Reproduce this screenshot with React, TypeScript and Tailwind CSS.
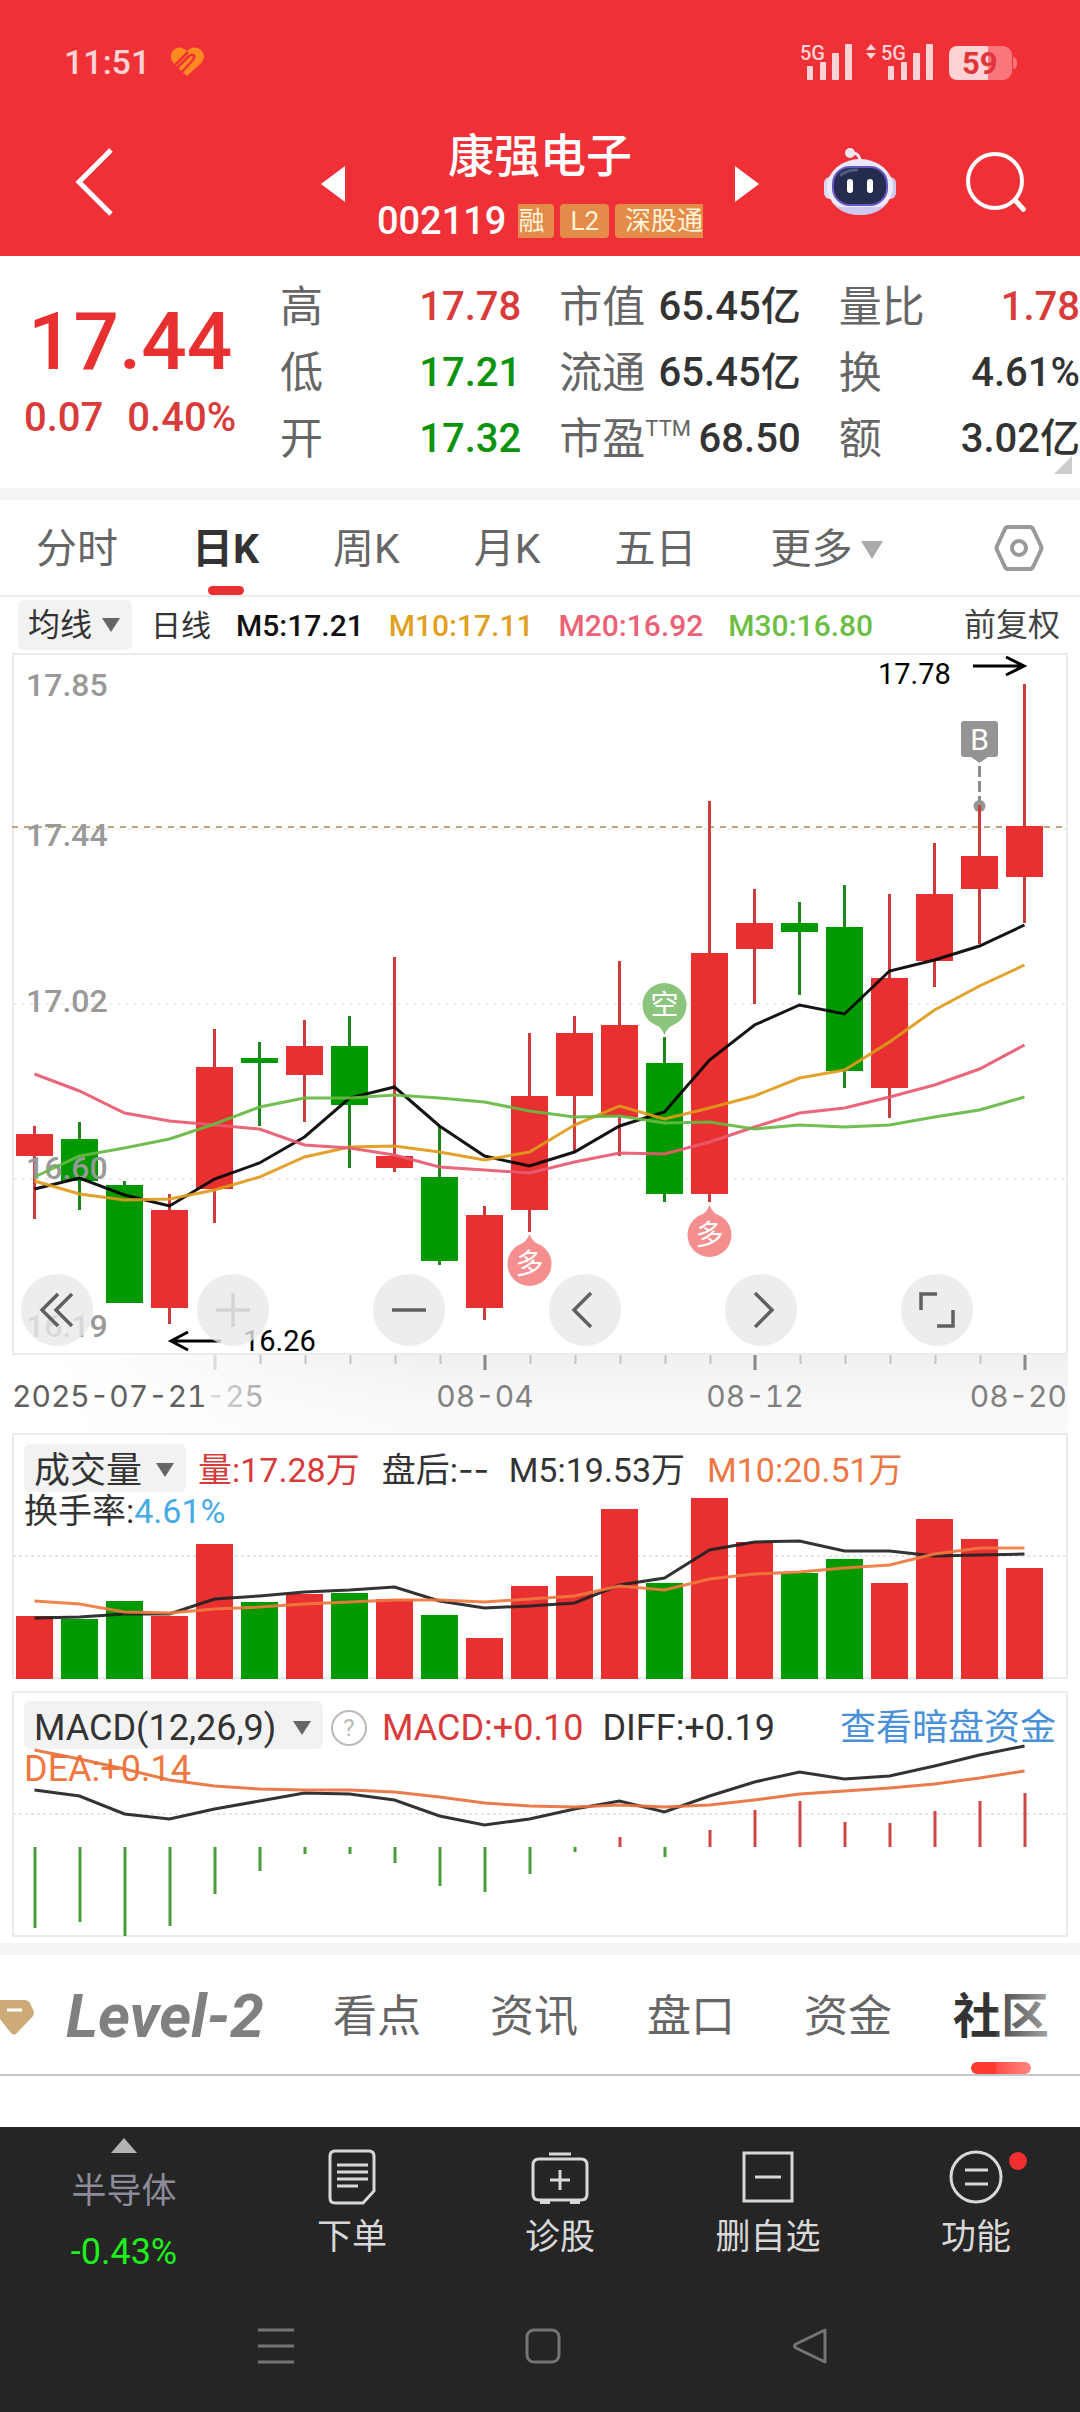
import { useState } from "react";

const RED = "#e83030";
const GREEN = "#009900";

// up, open/close body top, body bottom, wick top, wick bottom
const CANDLES: [boolean, number, number, number, number][] = [
  [true, 1134, 1156, 1126, 1219],
  [false, 1139, 1181, 1122, 1210],
  [false, 1185, 1303, 1181, 1303],
  [true, 1210, 1308, 1194, 1324],
  [true, 1067, 1189, 1029, 1223],
  [false, 1058, 1063, 1042, 1126],
  [true, 1046, 1075, 1020, 1122],
  [false, 1046, 1105, 1016, 1168],
  [true, 1156, 1168, 957, 1172],
  [false, 1177, 1261, 1126, 1265],
  [true, 1215, 1308, 1206, 1320],
  [true, 1096, 1210, 1033, 1232],
  [true, 1033, 1096, 1016, 1152],
  [true, 1025, 1117, 961, 1156],
  [false, 1063, 1194, 1037, 1202],
  [true, 953, 1194, 801, 1202],
  [true, 923, 949, 889, 1004],
  [false, 923, 932, 902, 995],
  [false, 927, 1071, 885, 1088],
  [true, 978, 1088, 894, 1118],
  [true, 894, 961, 843, 987],
  [true, 856, 889, 805, 944],
  [true, 826, 877, 684, 923],
];

const MA5 = [1189, 1178, 1195, 1206, 1179, 1163, 1137, 1098, 1087, 1126, 1156, 1166, 1152, 1126, 1112, 1060, 1025, 1005, 1014, 971, 960, 946, 925];
const MA10 = [1181, 1194, 1200, 1199, 1190, 1177, 1157, 1147, 1146, 1152, 1160, 1152, 1125, 1106, 1119, 1108, 1096, 1078, 1070, 1042, 1010, 986, 965];
const MA20 = [1074, 1091, 1113, 1121, 1125, 1129, 1145, 1148, 1155, 1167, 1170, 1173, 1162, 1153, 1154, 1142, 1127, 1113, 1108, 1097, 1085, 1069, 1045];
const MA30 = [1177, 1156, 1148, 1139, 1124, 1107, 1098, 1098, 1095, 1098, 1102, 1111, 1117, 1116, 1123, 1122, 1129, 1125, 1127, 1125, 1117, 1110, 1097];

const VOLUMES = [1616, 1619, 1601, 1616, 1544, 1602, 1594, 1593, 1599, 1615, 1638, 1586, 1576, 1509, 1583, 1498, 1542, 1573, 1559, 1583, 1519, 1539, 1568];
const VOL5 = [1618, 1617, 1614, 1614, 1599, 1596, 1592, 1590, 1587, 1601, 1608, 1606, 1603, 1585, 1578, 1550, 1542, 1541, 1551, 1551, 1556, 1555, 1554];
const VOL10 = [1601, 1604, 1612, 1613, 1609, 1607, 1604, 1602, 1600, 1600, 1602, 1599, 1596, 1586, 1590, 1579, 1574, 1572, 1568, 1565, 1554, 1548, 1548];

const DIFF = [1790, 1796, 1814, 1819, 1809, 1801, 1793, 1794, 1800, 1816, 1825, 1819, 1809, 1801, 1812, 1796, 1782, 1772, 1779, 1776, 1766, 1755, 1746];
const DEA = [1750, 1759, 1769, 1780, 1786, 1789, 1790, 1790, 1792, 1797, 1803, 1806, 1807, 1805, 1807, 1805, 1800, 1794, 1791, 1788, 1784, 1778, 1771];
const HIST = [1928, 1922, 1936, 1926, 1894, 1871, 1854, 1854, 1863, 1886, 1892, 1874, 1852, 1837, 1857, 1830, 1810, 1801, 1822, 1823, 1811, 1801, 1793];

const cx = (i: number) => 34.5 + i * 45;
const toPoints = (ys: number[]) => ys.map((y, i) => `${cx(i)},${y}`).join(" ");

function Line({ data, color }: { data: number[]; color: string }) {
  return <polyline points={toPoints(data)} fill="none" stroke={color} strokeWidth="3" strokeOpacity="0.92" />;
}

function Down({ className }: { className: string }) {
  return (
    <svg viewBox="0 0 20 14" className={className} fill="currentColor" preserveAspectRatio="none">
      <path d="M0 0h20L10 14z" />
    </svg>
  );
}

function Chip({ name, value, className }: { name: string; value: string; className: string }) {
  return (
    <label className="relative shrink-0 text-[#666]">
      <select
        aria-label={name}
        defaultValue={value}
        className={`appearance-none rounded-md bg-[#f2f2f2] pl-2.5 text-[#333] ${className}`}
      >
        <option>{value}</option>
      </select>
      <Down className="pointer-events-none absolute right-3 top-1/2 h-3.5 w-[18px] -translate-y-1/2" />
    </label>
  );
}

function StatusBar() {
  return (
    <div className="flex h-[100px] items-start justify-between pl-16 pr-[62px] pt-[42px]">
      <div className="flex items-center gap-5">
        <span className="text-[34px] font-medium leading-[40px] text-[#ffd3d5]">11:51</span>
        <svg viewBox="0 0 34 30" className="h-[30px] w-[34px]">
          <path d="M17 29 4 17Q-1 11 2 5 6-1 12 1 15 2 17 4 22-1 28 1 34 4 34 10 33 15 29 18z" fill="#ff8a1f" />
          <path d="M4 19 18 5M12 25 22 14Q26 9 23 8 21 7 18 10L7 21" fill="none" stroke="#f03037" strokeWidth="2.500" />
        </svg>
      </div>
      <svg viewBox="0 0 218 42" className="h-[42px] w-[218px]" fill="#ffd3d5">
        {[0, 81].map((x) => (
          <g key={x}>
            <text x={x} y="18" fontSize="20" fontWeight="500">5G</text>
            <rect x={x + 7} y="24" width="6" height="14" rx="1" />
            <rect x={x + 20} y="20" width="6" height="18" rx="1" />
            <rect x={x + 32} y="11" width="7" height="27" rx="1" />
            <rect x={x + 45} y="2" width="7" height="36" rx="1" />
          </g>
        ))}
        <path d="M66 8l5-6 5 6zM66 11l5 6 5-6z" />
        <rect x="149" y="4" width="63" height="34" rx="9" fill="#f9767a" />
        <path d="M213 15q4 0 4 6t-4 6z" fill="#f9767a" />
        <path d="M158 4h30v34h-30q-9 0-9-9V13q0-9 9-9z" />
        <text x="162" y="32" fontSize="31" fontWeight="700" fill="#e0353b">59</text>
      </svg>
    </div>
  );
}

function Robot() {
  return (
    <svg viewBox="0 0 72 68" className="h-[68px] w-[72px]">
      <path d="M26 6q8-3 10 6" fill="none" stroke="#e6e4f5" strokeWidth="3" />
      <circle cx="26" cy="5" r="5" fill="#e9e7f6" />
      <rect x="0" y="29" width="12" height="22" rx="6" fill="#dcd8f2" />
      <rect x="60" y="29" width="12" height="22" rx="6" fill="#cfc8ee" />
      <ellipse cx="36" cy="39" rx="33" ry="28" fill="#eceafa" />
      <path d="M8 54q9 13 28 13t28-13q-5 5-12 5H20q-7 0-12-5z" fill="#cdc8ee" />
      <rect x="9" y="19" width="54" height="38" rx="17" fill="#252c4d" stroke="#6557c4" strokeWidth="2" />
      <path d="M17 27q6-5 16-5" stroke="#4c5b80" strokeWidth="3" fill="none" strokeLinecap="round" />
      <rect x="23" y="31" width="6" height="14" rx="3" fill="#fff" />
      <rect x="43" y="31" width="6" height="14" rx="3" fill="#fff" />
    </svg>
  );
}

function Header() {
  return (
    <header className="bg-[#f03037] text-white">
      <StatusBar />
      <div className="grid h-[156px] grid-cols-[1fr_438px_1fr] items-center">
        <button aria-label="返回" className="ml-[74px] mt-2 w-10">
          <svg viewBox="0 0 40 68" className="h-[68px] w-10" fill="none" stroke="currentColor" strokeWidth="5">
            <path d="M37 2 5 34 37 66" />
          </svg>
        </button>
        <div className="flex items-center justify-between">
          <button aria-label="上一只" className="mt-3">
            <svg viewBox="0 0 24 36" className="h-9 w-6" fill="currentColor"><path d="M24 0v36L0 18z" /></svg>
          </button>
          <div className="flex flex-col items-center pt-3">
            <h1 className="text-[46px] font-medium leading-[58px]">康强电子</h1>
            <div className="mt-4 flex items-center text-[26px] leading-[34px] text-[#fff3d9]">
              <span className="mr-3 text-[38px] font-medium leading-[40px] text-white">002119</span>
              <span className="mr-1.5 rounded-r bg-[#e48b49] pr-2.5">融</span>
              <span className="mr-1.5 rounded bg-[#e48b49] px-2.5">L2</span>
              <span className="rounded-l bg-[#e48b49] pl-2.5">深股通</span>
            </div>
          </div>
          <button aria-label="下一只" className="mt-3">
            <svg viewBox="0 0 24 36" className="h-9 w-6" fill="currentColor"><path d="M0 0v36l24-18z" /></svg>
          </button>
        </div>
        <div className="flex items-center justify-end gap-[70px] pr-[54px]">
          <button aria-label="智能助手" className="mt-2"><Robot /></button>
          <button aria-label="搜索" className="mt-2">
            <svg viewBox="0 0 60 60" className="size-[60px]" fill="none" stroke="currentColor" strokeWidth="4">
              <circle cx="29" cy="29" r="27" />
              <path d="M48 47 59 59" strokeWidth="5" />
            </svg>
          </button>
        </div>
      </div>
    </header>
  );
}

const STATS = [
  { label: "高", value: "17.78", color: "text-[#d93a3a]" },
  { label: "市值", value: "65.45亿", color: "text-[#333]" },
  { label: "量比", value: "1.78", color: "text-[#d93a3a]" },
  { label: "低", value: "17.21", color: "text-[#0c930c]" },
  { label: "流通", value: "65.45亿", color: "text-[#333]" },
  { label: "换", value: "4.61%", color: "text-[#333]" },
  { label: "开", value: "17.32", color: "text-[#0c930c]" },
  { label: "市盈", sup: "TTM", value: "68.50", color: "text-[#333]" },
  { label: "额", value: "3.02亿", color: "text-[#333]" },
];

function Quote() {
  return (
    <section className="relative flex border-b-[12px] border-[#f4f4f4] pb-4 pt-[18px]">
      <div className="w-[280px] pt-7 text-[#d93a3a]">
        <div className="pl-7 text-[80px] font-medium leading-[80px] text-[#e83030]">17.44</div>
        <div className="mt-3 flex gap-6 pl-6 text-[40px] font-medium leading-[48px]">
          <span>0.07</span>
          <span>0.40%</span>
        </div>
      </div>
      <dl className="grid flex-1 grid-cols-3 gap-x-[38px]">
        {STATS.map((s) => (
          <div key={s.label} className="flex h-[66px] items-center justify-between whitespace-nowrap">
            <dt className="flex text-[43px] leading-[60px] text-[#666]">
              {s.label}
              {s.sup && <sup className="top-0 text-[22px] leading-[40px]">{s.sup}</sup>}
            </dt>
            <dd className={`text-[40px] font-medium leading-[60px] ${s.color}`}>{s.value}</dd>
          </div>
        ))}
      </dl>
      <svg viewBox="0 0 18 18" className="absolute bottom-3.5 right-2 size-[18px]" fill="#ccc">
        <path d="M18 0v18H0z" />
      </svg>
    </section>
  );
}

const PERIODS = ["分时", "日K", "周K", "月K", "五日"];

function PeriodTabs() {
  const [active, setActive] = useState("日K");
  return (
    <nav className="flex h-[97px] items-stretch gap-[74px] border-b-2 border-[#ebebeb] pl-9 pr-9 text-[41px] text-[#666]">
      {PERIODS.map((p) => (
        <button
          key={p}
          onClick={() => setActive(p)}
          className={p === active ? "relative pt-1 font-bold text-[#333]" : "relative pt-1"}
        >
          {p}
          {p === active && (
            <span className="absolute bottom-0 left-1/2 h-[9px] w-9 -translate-x-1/2 rounded-full bg-[#e83030]" />
          )}
        </button>
      ))}
      <button aria-haspopup="menu" className="flex items-center gap-2 pt-1">
        更多
        <Down className="h-[18px] w-[22px] text-[#aaa]" />
      </button>
      <button aria-label="设置" className="ml-auto">
        <svg viewBox="0 0 50 46" className="h-[46px] w-[50px]" fill="none" stroke="#999" strokeWidth="4" strokeLinejoin="round">
          <path d="M14 2h22q2 0 3 2l8 17q1 2 0 4l-8 17q-1 2-3 2H14q-2 0-3-2L3 25q-1-2 0-4l8-17q1-2 3-2z" />
          <circle cx="25" cy="23" r="7" />
        </svg>
      </button>
    </nav>
  );
}

function AverageRow() {
  return (
    <div className="flex h-[56px] items-center gap-[25px] whitespace-nowrap pl-[18px] pr-5 text-[30px] font-medium">
      <Chip name="指标" value="均线" className="h-[50px] w-[114px] text-[32px] font-normal" />
      <span className="-ml-1.5 font-normal text-[#333]">日线</span>
      <span className="text-[#111]">M5:17.21</span>
      <span className="text-[#e0a020]">M10:17.11</span>
      <span className="text-[#eb6175]">M20:16.92</span>
      <span className="text-[#6cbe45]">M30:16.80</span>
      <button className="ml-auto text-[32px] font-normal text-[#444]">前复权</button>
    </div>
  );
}

function Pin({ x, y, text, up }: { x: number; y: number; text: string; up?: boolean }) {
  const color = up ? "#f58f8f" : "#8bc57d";
  const s = up ? -1 : 1;
  return (
    <g>
      <circle cx={x} cy={y} r="22" fill={color} />
      <path d={`M${x - 11} ${y + s * 18}Q${x - 3} ${y + s * 22} ${x} ${y + s * 30}Q${x + 3} ${y + s * 22} ${x + 11} ${y + s * 18}z`} fill={color} />
      <text x={x} y={y + 10} fontSize="28" fill="#fff" textAnchor="middle">{text}</text>
    </g>
  );
}

const TOOLS = [
  { name: "展开", d: "M19 2 3 18 19 34M33 2 17 18 33 34" },
  { name: "放大", d: "M1 18h34M18 1v34", off: true },
  { name: "缩小", d: "M1 18h34" },
  { name: "向左", d: "M24 1 7 18 24 35" },
  { name: "向右", d: "M12 1 29 18 12 35" },
  { name: "全屏", d: "M2 18V2H18M34 18V34H18" },
];

function CandleChart() {
  return (
    <div className="relative">
      <svg viewBox="0 653 1080 780" className="block w-full">
        <defs>
          <linearGradient id="axis" x1="0" y1="0" x2="0" y2="1">
            <stop offset="0" stopColor="#f0f0f0" />
            <stop offset="0.6" stopColor="#f8f8f8" />
            <stop offset="1" stopColor="#fafafa" />
          </linearGradient>
          <linearGradient id="fade">
            <stop offset="0.1" stopColor="#fff" />
            <stop offset="1" stopColor="#fff" stopOpacity="0" />
          </linearGradient>
          <linearGradient id="dateFade">
            <stop offset="0" stopColor="#e4e4e4" />
            <stop offset="1" stopColor="#a8a8a8" />
          </linearGradient>
        </defs>
        <rect x="12" y="1355" width="1056" height="78" fill="url(#axis)" />
        <rect x="12" y="1355" width="420" height="78" fill="url(#fade)" />
        <rect x="13" y="654" width="1054" height="700" fill="none" stroke="#ebebeb" strokeWidth="2" />
        <path d="M13 1004H1067M13 1179H1067" stroke="#ddd" strokeWidth="1" strokeDasharray="4 4" />
        <path d="M20 829H1067" stroke="#ddd" strokeWidth="1" strokeDasharray="5 7" />
        <path d="M12 827H1067" stroke="#bfa57a" strokeWidth="2" strokeDasharray="6 6" />

        <path d="M979.5 766V805" stroke="#8c8c8c" strokeDasharray="11 4" strokeWidth="3" />
        <circle cx="979.5" cy="806" r="6" fill="#949494" />
        {CANDLES.map(([up, top, bottom, high, low], i) => (
          <g key={i}>
            <rect x={cx(i) - 1.5} y={high} width="3" height={low - high} fill={up ? "#cb3d3d" : "#1c871c"} />
            <rect x={cx(i) - 18.5} y={top} width="37" height={bottom - top} fill={up ? RED : GREEN} />
          </g>
        ))}
        <g fontSize="32" fontWeight="500" fill="#999">
          <text x="26" y="696">17.85</text>
          <text x="26" y="846">17.44</text>
          <text x="26" y="1012">17.02</text>
          <text x="26" y="1179">16.60</text>
          <text x="26" y="1337">16.19</text>
        </g>
        <Line data={MA5} color="#000" />
        <Line data={MA10} color="#e09a1a" />
        <Line data={MA20} color="#e85a70" />
        <Line data={MA30} color="#66b844" />

        <g fontSize="29" fill="#000">
          <text x="878" y="684">17.78</text>
          <text x="243" y="1351">16.26</text>
        </g>
        <path d="M973 666H1024M1006 657 1024 666 1006 675M221 1341H171M188 1332 171 1341 188 1350" fill="none" stroke="#000" strokeWidth="3" />
        <path d="M964 721h31q3 0 3 3v30q0 3-3 3h-7l-8.500 6-8.500-6h-7q-3 0-3-3v-30q0-3 3-3z" fill="#949494" />
        <text x="979.5" y="750" fontSize="30" fill="#fff" textAnchor="middle">B</text>
        <Pin x={664.5} y={1005} text="空" />
        <Pin x={529.5} y={1264} text="多" up />
        <Pin x={709.5} y={1235} text="多" up />

        {CANDLES.map((_, i) => {
          if (i < 4) return null;
          const major = (i - 4) % 6 === 0;
          return (
            <rect
              key={i}
              x={cx(i) - (major ? 1 : 0)}
              y="1355"
              width={major ? 3 : 2}
              height={major ? 15 : 9}
              fill={i === 4 ? "#ddd" : major ? "#888" : "#c4c4c4"}
            />
          );
        })}
        <g fontSize="30" className="font-['Inter'] tabular-nums" fill="#808080">
          <text x="12" y="1407" fill="#606060">2025-07-21</text>
          <text x="264" y="1407" textAnchor="end" fill="url(#dateFade)">-25</text>
          <text x="485" y="1407" textAnchor="middle">08-04</text>
          <text x="755" y="1407" textAnchor="middle">08-12</text>
          <text x="1067" y="1407" textAnchor="end">08-20</text>
        </g>
      </svg>
      <div className="absolute bottom-[87px] left-[21px] right-[107px] flex justify-between">
        {TOOLS.map((t) => (
          <button
            key={t.name}
            aria-label={t.name}
            disabled={t.off}
            className={`flex size-[72px] items-center justify-center rounded-full bg-[#e8e8e8]/80 ${t.off ? "text-[#d4d4d4]" : "text-[#606060]"}`}
          >
            <svg viewBox="0 0 36 36" className="size-9" fill="none" stroke="currentColor" strokeWidth="3.500">
              <path d={t.d} />
            </svg>
          </button>
        ))}
      </div>
    </div>
  );
}

function VolumeChart() {
  return (
    <div className="relative text-[34px] text-[#333]">
      <svg viewBox="0 1433 1080 258" className="block w-full">
        <rect x="13" y="1434" width="1054" height="244" fill="none" stroke="#ebebeb" strokeWidth="2" />
        <path d="M13 1556H1067" stroke="#e6e6e6" strokeWidth="2" strokeDasharray="3 3" />
        {VOLUMES.map((y, i) => (
          <rect key={i} x={cx(i) - 18.5} y={y} width="37" height={1679 - y} fill={CANDLES[i][0] ? RED : GREEN} />
        ))}
        <Line data={VOL5} color="#222" />
        <Line data={VOL10} color="#f07840" />
      </svg>
      <div className="absolute left-6 right-4 top-[13px]">
        <div className="flex h-12 items-center whitespace-nowrap">
          <Chip name="副图一" value="成交量" className="h-12 w-[162px] text-[36px]" />
          <span className="ml-3 text-[#d93a3a]">量:17.28万</span>
          <span className="ml-[22px] w-[127px]">盘后:<span className="font-['Inter']">--</span></span>
          <span>M5:19.53万</span>
          <span className="ml-[22px] text-[#ee7744]">M10:20.51万</span>
        </div>
        <div className="leading-[34px]">
          换手率:<span className="text-[#45aae6]">4.61%</span>
        </div>
      </div>
    </div>
  );
}

function MacdChart() {
  return (
    <div className="relative border-b-[12px] border-[#f4f4f4] text-[36px] text-[#333]">
      <svg viewBox="0 1691 1080 252" className="block w-full">
        <rect x="13" y="1692" width="1054" height="244" fill="none" stroke="#ebebeb" strokeWidth="2" />
        <path d="M13 1814H1067" stroke="#e6e6e6" strokeWidth="2" strokeDasharray="3 3" />
        {HIST.map((y, i) => (
          <rect
            key={i}
            x={cx(i) - 1}
            y={Math.min(y, 1847)}
            width="3"
            height={Math.abs(y - 1847)}
            fill={y < 1847 ? "#cf4646" : "#4a9b3c"}
          />
        ))}
      </svg>
      <div className="absolute left-6 right-6 top-[13px]">
        <div className="flex h-12 items-center whitespace-nowrap">
          <Chip name="副图二" value="MACD(12,26,9)" className="h-12 w-[299px]" />
          <button aria-label="说明" className="ml-2 size-9 rounded-full border-2 border-[#bbb] text-2xl leading-none text-[#bbb]">?</button>
          <span className="ml-[15px] text-[#d93a3a]">MACD:+0.10</span>
          <span className="ml-[19px]">DIFF:+0.19</span>
          <a href="#funds" className="ml-auto text-[#4a90d9]">查看暗盘资金</a>
        </div>
        <div className="leading-[34px] text-[#f07840]">DEA:+0.14</div>
      </div>
      <svg viewBox="0 1691 1080 252" className="pointer-events-none absolute inset-x-0 top-0 w-full">
        <Line data={DIFF} color="#222" />
        <Line data={DEA} color="#e8703c" />
      </svg>
    </div>
  );
}

function SectionTabs() {
  return (
    <nav className="relative flex h-[121px] items-center gap-[69px] overflow-hidden whitespace-nowrap border-b-2 border-[#c8c8c8] text-[44px] text-[#666]">
      <button className="flex items-center gap-8 pt-1 text-[61px] font-bold italic text-[#808080]">
        <svg viewBox="0 0 34 36" className="h-9 w-[34px]">
          <path d="M0 1h24q4 0 6 3l4 9q0 2-1 4L17 34q-3 3-6 0L0 20z" fill="#cdaa78" />
          <path d="M7 11h15" stroke="#fff" strokeWidth="3" />
        </svg>
        Level-2
      </button>
      <button className="pt-1">看点</button>
      <button className="pt-1">资讯</button>
      <button className="pt-1">盘口</button>
      <button className="pt-1">资金</button>
      <button className="relative -ml-2 flex h-full items-center pt-1 text-[48px] font-bold text-[#333]">
        社区
        <span className="absolute bottom-0 left-1/2 h-3 w-[60px] -translate-x-1/2 rounded-full bg-[#ff3b30]" />
      </button>
      <div className="pointer-events-none absolute right-0 top-0 h-full w-[84px] bg-gradient-to-r from-white/10 to-white/80" />
    </nav>
  );
}

const ACTIONS = [
  {
    name: "下单",
    icon: (
      <>
        <path d="M8 3h34q5 0 5 5v35L36 55H8q-5 0-5-5V8q0-5 5-5z" />
        <path d="M10 17h31M10 24h31M10 31h31M10 38h21" />
      </>
    ),
  },
  {
    name: "诊股",
    icon: (
      <>
        <path d="M14 6h22M4 11h42q6 0 6 6v29q0 6-6 6H4q-6 0-6-6V17q0-6 6-6zM25 22v20M15 32h20" />
        <path d="M5 54h10M35 54h10" strokeWidth="4" />
      </>
    ),
  },
  {
    name: "删自选",
    icon: <path d="M1 5h48v48H1zM12 29h26" />,
  },
  {
    name: "功能",
    icon: (
      <>
        <circle cx="25" cy="29" r="25" />
        <path d="M14 22h23M14 36h23" />
      </>
    ),
    dot: true,
  },
];

function BottomBar() {
  return (
    <footer className="mt-[51px] bg-[#252525]">
      <div className="flex h-[173px] text-[35px] leading-[44px] text-[#d8d8d8]">
        <button className="flex w-[248px] flex-col items-center pt-[11px] text-[#8c8c99]">
          <svg viewBox="0 0 26 15" className="h-[15px] w-[26px]" fill="#b4b4b4"><path d="M0 15h26L13 0z" /></svg>
          <span className="mt-[17px]">半导体</span>
          <span className="mt-4 text-[36px] text-[#1ef01e]">-0.43%</span>
        </button>
        {ACTIONS.map((a) => (
          <button key={a.name} className="flex flex-1 flex-col items-center pt-[21px]">
            <span className="relative">
              <svg viewBox="-4 0 58 58" className="size-[58px]" fill="none" stroke="currentColor" strokeWidth="3">
                {a.icon}
              </svg>
              {a.dot && <span className="absolute -right-[22px] top-1 size-[18px] rounded-full bg-[#f03030]" />}
            </span>
            <span className="mt-2.5">{a.name}</span>
          </button>
        ))}
      </div>
      <div className="flex h-[112px] items-start justify-between pl-[258px] pr-[252px] pt-7 text-[#757575]">
        <button aria-label="最近任务">
          <svg viewBox="0 0 36 36" className="size-9" stroke="currentColor" strokeWidth="3"><path d="M0 2h36M0 18h36M0 34h36" /></svg>
        </button>
        <button aria-label="主屏幕">
          <svg viewBox="0 0 36 36" className="size-9" fill="none" stroke="currentColor" strokeWidth="3"><rect x="2" y="2" width="32" height="32" rx="7" /></svg>
        </button>
        <button aria-label="系统返回">
          <svg viewBox="0 0 36 36" className="size-9" fill="none" stroke="currentColor" strokeWidth="3" strokeLinejoin="round">
            <path d="M33 2v32L4 20q-3-2 0-4z" />
          </svg>
        </button>
      </div>
    </footer>
  );
}

export default function App() {
  return (
    <main className="min-h-screen overflow-hidden bg-white font-['Roboto','Noto_Sans_CJK_SC',sans-serif]">
      <Header />
      <Quote />
      <PeriodTabs />
      <AverageRow />
      <CandleChart />
      <VolumeChart />
      <MacdChart />
      <SectionTabs />
      <BottomBar />
    </main>
  );
}
